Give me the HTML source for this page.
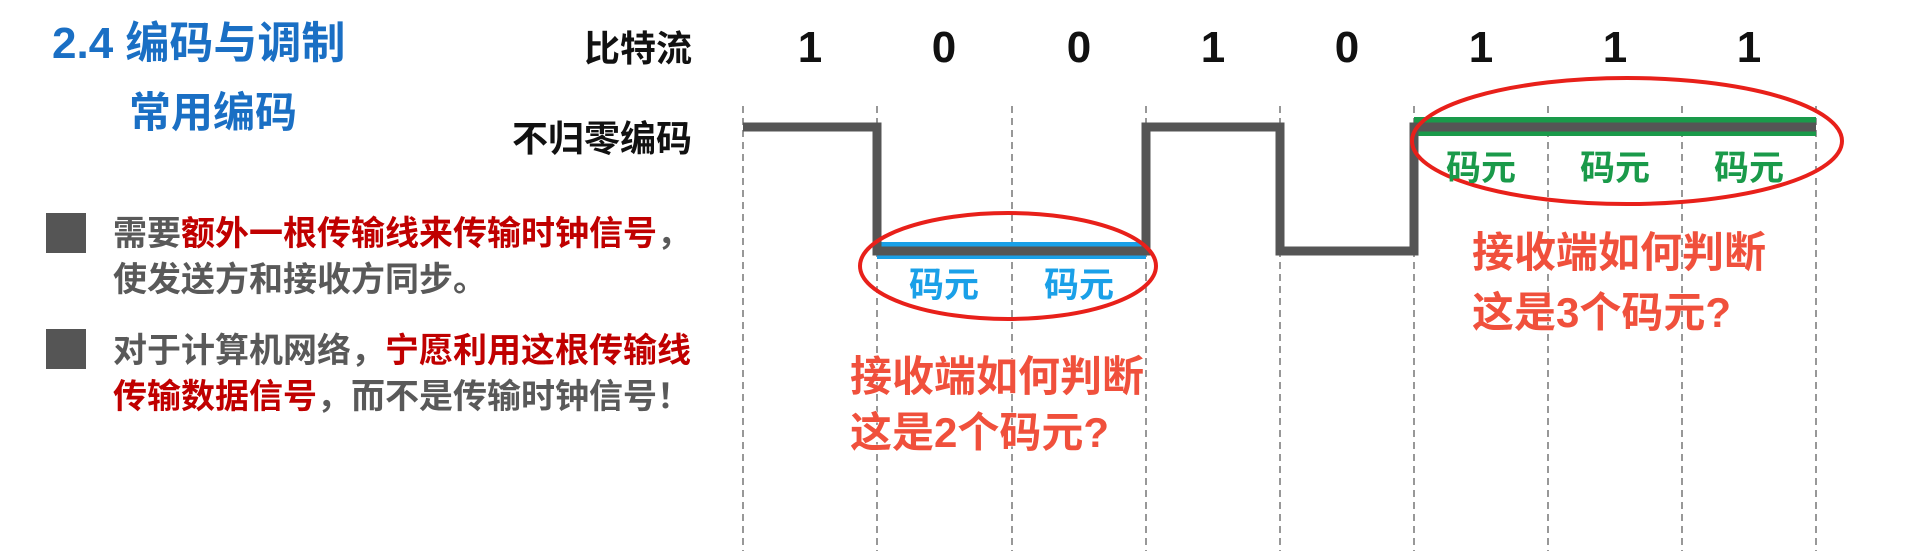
<!DOCTYPE html>
<html><head><meta charset="utf-8"><style>
html,body{margin:0;padding:0;background:#fff;width:1918px;height:551px;overflow:hidden}
svg text{font-family:"Liberation Sans","Noto Sans CJK SC",sans-serif;font-weight:bold}
</style></head><body>
<svg width="1918" height="551" viewBox="0 0 1918 551" xmlns="http://www.w3.org/2000/svg">
<g stroke="#777" stroke-width="1.5" stroke-dasharray="7,5">
<line x1="743" y1="106" x2="743" y2="551"/><line x1="877" y1="106" x2="877" y2="551"/>
<line x1="1012" y1="106" x2="1012" y2="551"/><line x1="1146" y1="106" x2="1146" y2="551"/>
<line x1="1280" y1="106" x2="1280" y2="551"/><line x1="1414" y1="106" x2="1414" y2="551"/>
<line x1="1548" y1="106" x2="1548" y2="551"/><line x1="1682" y1="106" x2="1682" y2="551"/>
<line x1="1816" y1="106" x2="1816" y2="551"/>
</g>
<rect x="877" y="242" width="269" height="17" fill="#1aa0e8"/>
<rect x="1414" y="117" width="402" height="19" fill="#1a9a4a"/>
<polyline points="743,127 877,127 877,251 1146,251 1146,127 1280,127 1280,251 1414,251 1414,127 1816,127" fill="none" stroke="#555" stroke-width="9"/>
<ellipse cx="1008" cy="266" rx="148" ry="53" fill="none" stroke="#e8201a" stroke-width="4"/>
<ellipse cx="1627" cy="141" rx="215" ry="63" fill="none" stroke="#e8201a" stroke-width="4"/>
<text x="52" y="58" font-size="44" fill="#1a6fc4">2.4 编码与调制</text>
<text x="129" y="127" font-size="42" fill="#1a6fc4">常用编码</text>
<text x="692" y="61" font-size="36" fill="#111" text-anchor="end">比特流</text>
<text x="692" y="151" font-size="36" fill="#111" text-anchor="end">不归零编码</text>
<g font-size="44" fill="#111" text-anchor="middle">
<text x="810" y="62">1</text><text x="944" y="62">0</text><text x="1079" y="62">0</text><text x="1213" y="62">1</text><text x="1347" y="62">0</text><text x="1481" y="62">1</text><text x="1615" y="62">1</text><text x="1749" y="62">1</text>
</g>
<g font-size="35" fill="#1aa0e8" text-anchor="middle"><text x="944" y="297">码元</text><text x="1079" y="297">码元</text></g>
<g font-size="35" fill="#1a9a4a" text-anchor="middle"><text x="1481" y="180">码元</text><text x="1615" y="180">码元</text><text x="1749" y="180">码元</text></g>
<g font-size="42" fill="#f0503c" stroke="#fff" stroke-width="1" paint-order="stroke">
<text x="850" y="391">接收端如何判断</text><text x="850" y="447">这是2个码元?</text>
<text x="1472" y="267">接收端如何判断</text><text x="1472" y="327">这是3个码元?</text>
</g>
<rect x="46" y="213" width="40" height="40" fill="#555"/>
<rect x="46" y="329" width="40" height="40" fill="#555"/>
<g font-size="34" fill="#595959">
<text x="113" y="245">需要<tspan fill="#c00000">额外一根传输线来传输时钟信号</tspan>，</text>
<text x="113" y="291">使发送方和接收方同步。</text>
<text x="113" y="362">对于计算机网络，<tspan fill="#c00000">宁愿利用这根传输线</tspan></text>
<text x="113" y="408"><tspan fill="#c00000">传输数据信号</tspan>，而不是传输时钟信号！</text>
</g>
</svg>
</body></html>
